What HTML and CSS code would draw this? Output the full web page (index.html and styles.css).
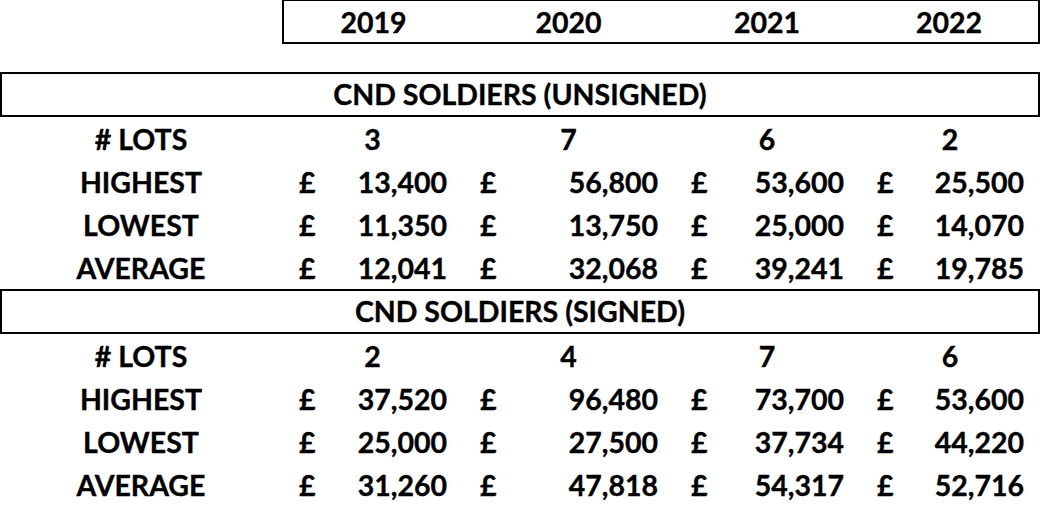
FILE: index.html
```html
<!DOCTYPE html>
<html lang="en">
<head>
<meta charset="utf-8">
<title>CND Soldiers</title>
<link rel="stylesheet" href="styles.css">
</head>
<body>
<div class="sheet">
  <div class="row years">
    <div class="cell blank"></div>
    <div class="cell year first">2019</div>
    <div class="cell year">2020</div>
    <div class="cell year">2021</div>
    <div class="cell year last">2022</div>
  </div>
  <div class="spacer"></div>

  <div class="section-title">CND SOLDIERS (UNSIGNED)</div>
  <div class="row data">
    <div class="cell label"># LOTS</div>
    <div class="cell count">3</div>
    <div class="cell count">7</div>
    <div class="cell count">6</div>
    <div class="cell count">2</div>
  </div>
  <div class="row data">
    <div class="cell label">HIGHEST</div>
    <div class="cell money"><span>£</span><span>13,400</span></div>
    <div class="cell money"><span>£</span><span>56,800</span></div>
    <div class="cell money"><span>£</span><span>53,600</span></div>
    <div class="cell money"><span>£</span><span>25,500</span></div>
  </div>
  <div class="row data">
    <div class="cell label">LOWEST</div>
    <div class="cell money"><span>£</span><span>11,350</span></div>
    <div class="cell money"><span>£</span><span>13,750</span></div>
    <div class="cell money"><span>£</span><span>25,000</span></div>
    <div class="cell money"><span>£</span><span>14,070</span></div>
  </div>
  <div class="row data">
    <div class="cell label">AVERAGE</div>
    <div class="cell money"><span>£</span><span>12,041</span></div>
    <div class="cell money"><span>£</span><span>32,068</span></div>
    <div class="cell money"><span>£</span><span>39,241</span></div>
    <div class="cell money"><span>£</span><span>19,785</span></div>
  </div>

  <div class="section-title">CND SOLDIERS (SIGNED)</div>
  <div class="row data">
    <div class="cell label"># LOTS</div>
    <div class="cell count">2</div>
    <div class="cell count">4</div>
    <div class="cell count">7</div>
    <div class="cell count">6</div>
  </div>
  <div class="row data">
    <div class="cell label">HIGHEST</div>
    <div class="cell money"><span>£</span><span>37,520</span></div>
    <div class="cell money"><span>£</span><span>96,480</span></div>
    <div class="cell money"><span>£</span><span>73,700</span></div>
    <div class="cell money"><span>£</span><span>53,600</span></div>
  </div>
  <div class="row data">
    <div class="cell label">LOWEST</div>
    <div class="cell money"><span>£</span><span>25,000</span></div>
    <div class="cell money"><span>£</span><span>27,500</span></div>
    <div class="cell money"><span>£</span><span>37,734</span></div>
    <div class="cell money"><span>£</span><span>44,220</span></div>
  </div>
  <div class="row data">
    <div class="cell label">AVERAGE</div>
    <div class="cell money"><span>£</span><span>31,260</span></div>
    <div class="cell money"><span>£</span><span>47,818</span></div>
    <div class="cell money"><span>£</span><span>54,317</span></div>
    <div class="cell money"><span>£</span><span>52,716</span></div>
  </div>
</div>
</body>
</html>
```

FILE: styles.css
```css
html, body {
  margin: 0;
  padding: 0;
  background: #ffffff;
}

.sheet {
  width: 1040px;
  font-family: "Lato", "DejaVu Sans", sans-serif;
  font-weight: 700;
  font-size: 28.5px;
  color: #000000;
  -webkit-text-stroke: 0.35px #000000;
}

.row {
  display: grid;
  grid-template-columns: 282px 181px 211px 186px 180px;
}

.cell {
  box-sizing: border-box;
  white-space: nowrap;
}

/* Year header row */
.years .cell {
  height: 44px;
}
.year {
  border-top: 1px solid #000;
  border-bottom: 2px solid #000;
  text-align: center;
  line-height: 43px;
}
.year.first {
  border-left: 2px solid #000;
}
.year.last {
  border-right: 2px solid #000;
}

.spacer {
  height: 28px;
}

/* Section titles */
.section-title {
  box-sizing: border-box;
  height: 45px;
  border: 2px solid #000;
  text-align: center;
  line-height: 40px;
}

/* Data rows */
.data .cell {
  height: 43px;
  line-height: 44px;
}
.label,
.count {
  text-align: center;
}
.money {
  display: flex;
  justify-content: space-between;
  padding: 0 16px 0 17px;
}
```
